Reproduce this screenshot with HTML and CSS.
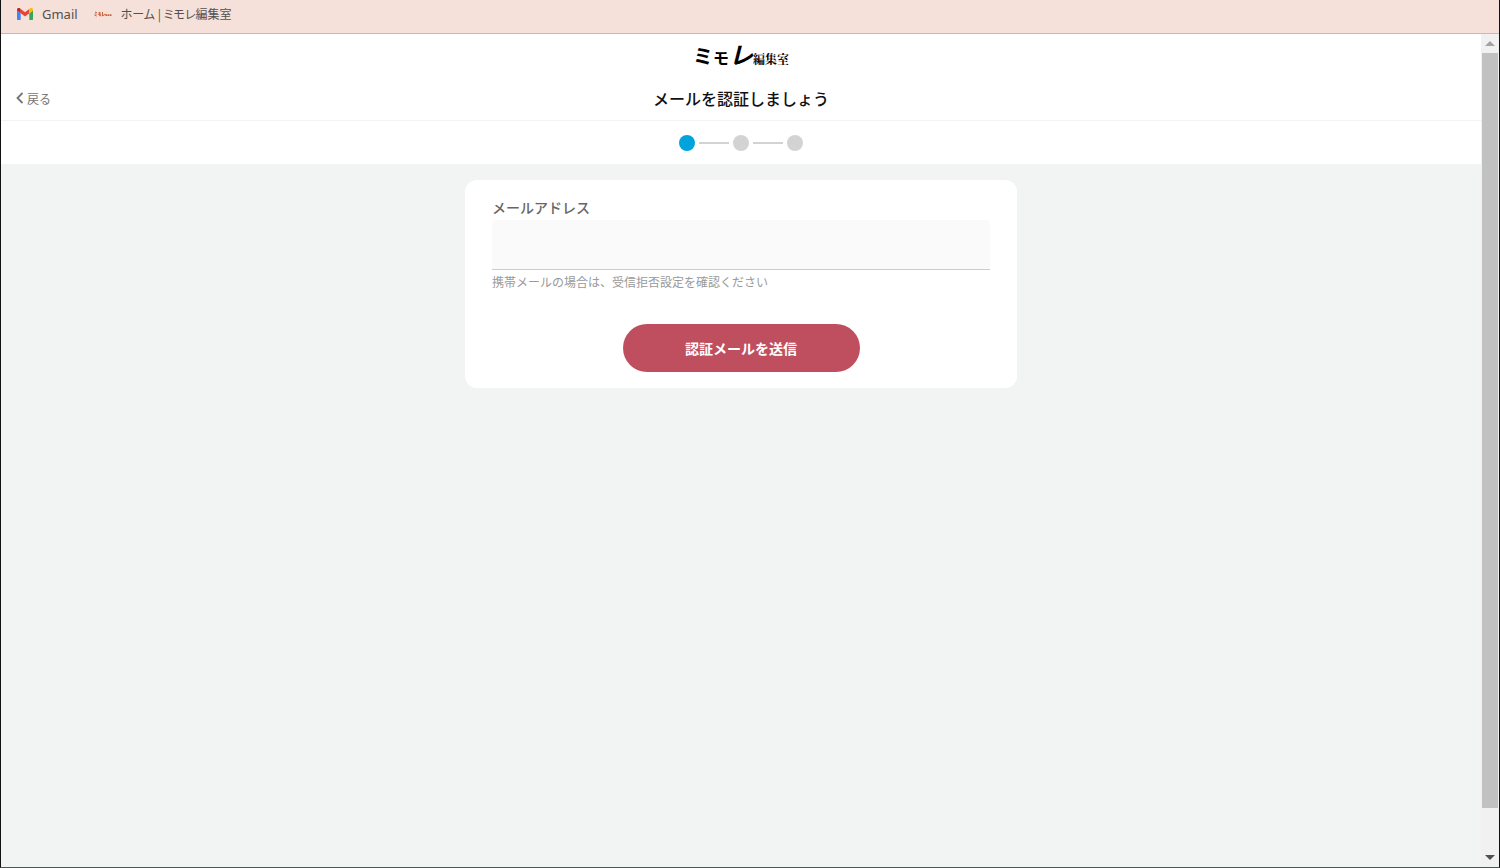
FILE: index.html
```html
<!DOCTYPE html>
<html lang="ja">
<head>
<meta charset="utf-8">
<meta name="viewport" content="width=device-width, initial-scale=1">
<title>ミモレ編集室</title>
<link rel="stylesheet" href="styles.css">
</head>
<body>
<div class="window">
  <nav class="bookmarks" aria-label="ブックマーク">
    <a class="bookmark" href="#gmail">
      <svg class="bookmark-icon" viewBox="0 0 16 12" aria-hidden="true">
        <path fill="#4285f4" d="M0 2.5v8.4C0 11.5.5 12 1.1 12h2.6V5.2z"/>
        <path fill="#34a853" d="M12.3 5.2V12h2.6c.6 0 1.1-.5 1.1-1.1V2.5z"/>
        <path fill="#ea4335" d="M3.7 5.2V.9L8 4.2 12.3.9v4.3L8 8.5z"/>
        <path fill="#fbbc04" d="M12.3.9v4.3L16 2.5V1.6C16 .3 14.5-.4 13.4.1z"/>
        <path fill="#c5221f" d="M0 2.5l3.7 2.7V.9L2.6.1C1.5-.4 0 .3 0 1.6z"/>
      </svg>
      <span>Gmail</span>
    </a>
    <a class="bookmark bookmark-home" href="#home">
      <svg class="bookmark-icon mark" viewBox="0 0 18 6" fill="none" stroke="#c9633f" aria-hidden="true">
        <path d="M1 1l2 .8M.8 2.7l1.8.7M.5 4.2l2.2.9M4.5 1.8h2.300M4.200 3.200h3M5.500 1.500v3.200h1.700M8.500 1v4l3-2"/>
        <path stroke-width="1.8" stroke-dasharray="1.7 .5" d="M11.3 4.2H18"/>
      </svg>
      <span>ホーム | ミモレ編集室</span>
    </a>
  </nav>
  <div class="viewport">
    <div class="page">
      <header class="header">
        <a class="logo" href="#top"><span class="logo-first">ミ</span><span class="logo-second">モ</span><span class="logo-third">レ</span><span class="logo-sub">編集室</span></a>
        <div class="title-bar">
          <a class="back" href="#back">
            <svg class="chevron" viewBox="0 0 8 12" fill="none" stroke="currentColor" stroke-width="1.8" aria-hidden="true"><path d="M6.5 1L1.5 6l5 5"/></svg>
            <span>戻る</span>
          </a>
          <h1 class="title">メールを認証しましょう</h1>
        </div>
      </header>
      <ol class="steps" aria-label="手順">
        <li class="step current" aria-current="step"></li>
        <li class="step"></li>
        <li class="step"></li>
      </ol>
      <main class="content">
        <form class="card">
          <label class="label" for="email">メールアドレス</label>
          <input class="field" id="email" type="email" aria-describedby="hint">
          <p class="hint" id="hint">携帯メールの場合は、受信拒否設定を確認ください</p>
          <button class="submit" type="button">認証メールを送信</button>
        </form>
      </main>
    </div>
    <div class="scrollbar" aria-hidden="true">
      <svg class="arrow up" viewBox="0 0 10 5"><path fill="currentColor" d="M0 5l5-5 5 5z"/></svg>
      <div class="track"><div class="thumb"></div></div>
      <svg class="arrow down" viewBox="0 0 10 5"><path fill="currentColor" d="M0 0h10L5 5z"/></svg>
    </div>
  </div>
</div>
</body>
</html>
```

FILE: styles.css
```css
* {
  box-sizing: border-box;
}

body {
  margin: 0;
  font-family: "Noto Sans CJK JP", sans-serif;
  color: #111;
}

a {
  color: inherit;
  text-decoration: none;
}

.window {
  display: flex;
  flex-direction: column;
  min-height: 100vh;
  border: solid #111;
  border-width: 0 1px;
  border-bottom: 1px solid #4c5758;
}

.bookmarks {
  display: flex;
  gap: 16px;
  height: 34px;
  padding: 4px 16px 0;
  border-bottom: 1px solid #c9b8b3;
  background: #f5e0da;
}

.bookmark {
  display: flex;
  align-items: center;
  gap: 9px;
  height: 20px;
  font-family: "Noto Sans", "Noto Sans CJK JP", sans-serif;
  font-size: 13px;
  line-height: 20px;
  color: #55504f;
}

.bookmark-home {
  font-family: "Noto Sans CJK JP", sans-serif;
  font-size: 12px;
  font-feature-settings: "palt";
}

.bookmark-icon {
  width: 16px;
  height: 12px;
}

.mark {
  width: 18px;
  height: 6px;
}

.viewport {
  display: flex;
  flex: 1;
}

.page {
  display: flex;
  flex: 1;
  flex-direction: column;
  background: #f1f4f3;
}

.header {
  padding-top: 4px;
  border-bottom: 1px solid #f3f3f3;
  background: #fff;
}

.logo {
  display: flex;
  align-items: baseline;
  justify-content: center;
  height: 38px;
  line-height: 32px;
  font-weight: 700;
  color: #000;
}

.logo-first {
  font-size: 20px;
}

.logo-second {
  font-size: 16px;
}

.logo-third {
  font-size: 24px;
  font-style: italic;
}

.logo-sub {
  font-family: "Noto Serif CJK JP", "Noto Sans CJK JP", serif;
  font-size: 12px;
}

.title-bar {
  display: grid;
  grid-template-columns: 1fr auto 1fr;
  align-items: center;
  height: 44px;
  padding: 0 15px;
}

.back {
  display: flex;
  align-items: center;
  gap: 3px;
  font-size: 12px;
  color: #757575;
}

.chevron {
  width: 8px;
  height: 12px;
}

.title {
  margin: 0;
  font-size: 16px;
  font-weight: 500;
  line-height: 24px;
}

.steps {
  display: flex;
  justify-content: center;
  align-items: center;
  gap: 38px;
  height: 43px;
  margin: 0;
  padding: 0;
  list-style: none;
  background: #fff;
}

.step {
  position: relative;
  width: 16px;
  height: 16px;
  border-radius: 50%;
  background: #d3d3d3;
}

.step + .step::before {
  content: "";
  position: absolute;
  top: 7px;
  right: 20px;
  width: 30px;
  height: 2px;
  background: #d3d3d3;
}

.step.current {
  background: #00a3dc;
}

.content {
  padding: 16px;
}

.card {
  display: flex;
  flex-direction: column;
  max-width: 552px;
  margin: 0 auto;
  padding: 16px 27px;
  border-radius: 12px;
  background: #fff;
}

.label {
  padding-bottom: 2px;
  font-size: 14px;
  font-weight: 500;
  line-height: 22px;
  color: #666;
}

.field {
  width: 100%;
  height: 50px;
  padding: 0 12px;
  border: 0;
  border-bottom: 1px solid #ccc;
  border-radius: 4px 4px 0 0;
  background: #fafafa;
  font: inherit;
}

.hint {
  margin: 3px 0 33px;
  font-size: 12px;
  line-height: 18px;
  color: #999;
}

.submit {
  align-self: center;
  width: 237px;
  height: 48px;
  border: 0;
  border-radius: 24px;
  background: #bf4f5e;
  font: inherit;
  font-size: 14px;
  font-weight: 700;
  color: #fff;
}

.scrollbar {
  display: flex;
  flex-direction: column;
  align-items: center;
  width: 18px;
  padding: 7px 0;
  background: #f1f1f1;
}

.arrow {
  width: 10px;
  height: 5px;
}

.up {
  color: #a3a3a3;
}

.down {
  color: #505050;
}

.track {
  display: grid;
  flex: 1;
  align-self: stretch;
  padding: 7px 1px;
}

.thumb {
  height: 95%;
  background: #c1c1c1;
}
```
